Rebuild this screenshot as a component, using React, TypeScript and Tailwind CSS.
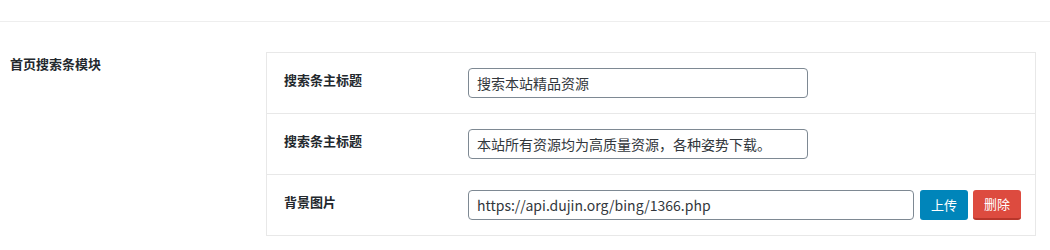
const fields = [
  { label: '搜索条主标题', value: '搜索本站精品资源' },
  { label: '搜索条主标题', value: '本站所有资源均为高质量资源，各种姿势下载。' },
];

const font = { fontFamily: '"Noto Sans CJK SC", "Liberation Sans", sans-serif' };

export default function App() {
  return (
    <div className="h-[250px] w-[1050px] bg-white text-[#23282d]" style={font}>
      <div className="h-[22px] border-b border-[#eeeeee]" />
      <div className="flex pt-[30px]">
        <div className="w-[266px] pl-[10px] pt-[2px] text-[13px] font-bold leading-[20px]">
          首页搜索条模块
        </div>
        <div className="w-[770px] border border-[#e8e8e8]">
          {fields.map((f, i) => (
            <div key={i} className="flex border-b border-[#e8e8e8] py-[15px] pl-[17px]">
              <div className="w-[184px] pt-[2px] text-[13px] font-bold leading-[20px]">{f.label}</div>
              <input
                readOnly
                value={f.value}
                className="h-[30px] w-[340px] rounded-[4px] border border-[#7e8993] px-[8px] text-[14px] text-[#32373c] outline-none"
                style={font}
              />
            </div>
          ))}
          <div className="flex py-[15px] pl-[17px]">
            <div className="w-[184px] pt-[2px] text-[13px] font-bold leading-[20px]">背景图片</div>
            <input
              readOnly
              value="https://api.dujin.org/bing/1366.php"
              className="h-[30px] w-[446px] rounded-[4px] border border-[#7e8993] px-[8px] text-[14px] text-[#32373c] outline-none"
              style={font}
            />
            <button
              type="button"
              className="ml-[6px] h-[30px] w-[48px] rounded-[3px] bg-[#0085ba] text-[13px] text-white"
            >
              上传
            </button>
            <button
              type="button"
              className="ml-[5px] h-[30px] w-[48px] rounded-[3px] border-b-2 border-[#b8362b] bg-[#dd4b3f] text-[13px] text-white"
            >
              删除
            </button>
          </div>
        </div>
      </div>
    </div>
  );
}
